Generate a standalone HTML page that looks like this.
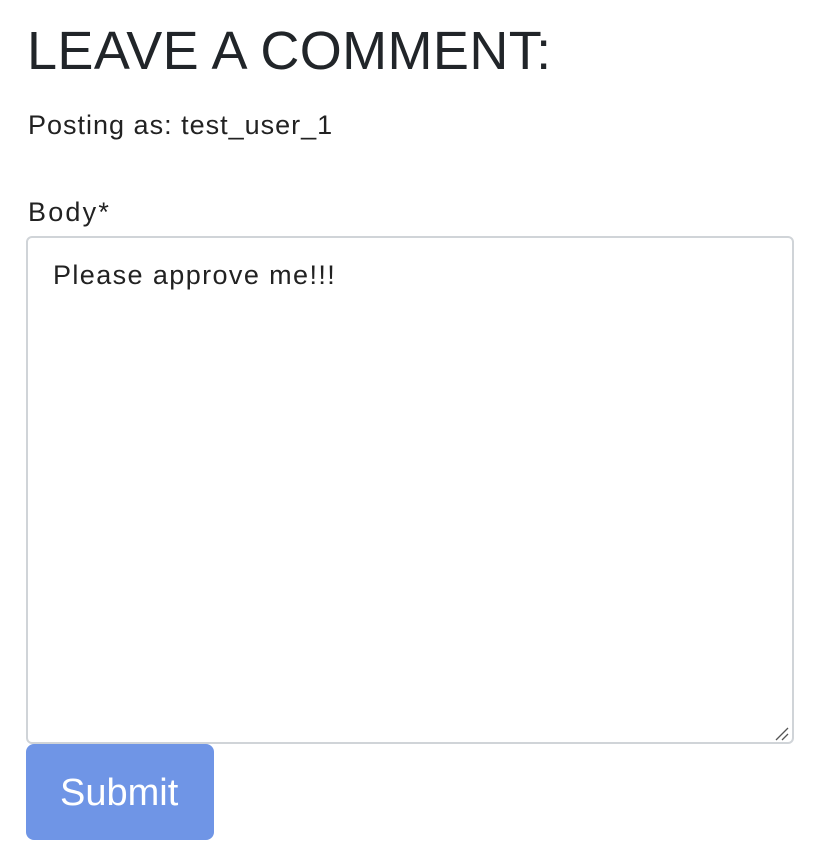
<!DOCTYPE html>
<html><head><style>
body{margin:0;width:824px;height:868px;background:#fff;font-family:"Liberation Sans",sans-serif;color:#222;position:relative;overflow:hidden}
.a{position:absolute;white-space:nowrap;line-height:1}
</style></head><body>
<div class="a" style="left:27px;top:24px;font-size:54px;color:#212529;letter-spacing:0.4px">LEAVE A COMMENT:</div>
<div class="a" style="left:28px;top:112px;font-size:27px;color:#222;letter-spacing:1px">Posting as: test_user_1</div>
<div class="a" style="left:28px;top:199px;font-size:27px;color:#222;letter-spacing:2.2px">Body*</div>
<div style="position:absolute;left:26px;top:236px;width:764px;height:504px;border:2px solid #d0d4d8;border-radius:6px;background:#fff"></div>
<div class="a" style="left:53px;top:262px;font-size:27px;color:#222;letter-spacing:1.4px">Please approve me!!!</div>
<svg style="position:absolute;left:774px;top:726px" width="16" height="16"><path d="M2 14L14 2M8 14L14 8" stroke="#555" stroke-width="1.3"/></svg>
<div style="position:absolute;left:26px;top:744px;width:188px;height:96px;background:#6f95e6;border-radius:8px"></div>
<div class="a" style="left:60px;top:774px;font-size:38px;color:#fff">Submit</div>
</body></html>
